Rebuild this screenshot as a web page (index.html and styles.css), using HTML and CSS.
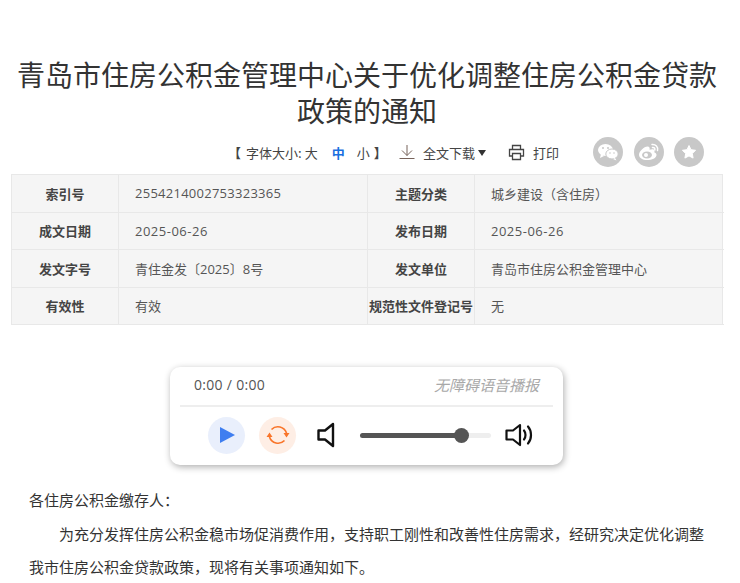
FILE: index.html
```html
<!DOCTYPE html>
<html lang="zh-CN">
<head>
<meta charset="utf-8">
<title>青岛市住房公积金管理中心关于优化调整住房公积金贷款政策的通知</title>
<link rel="stylesheet" href="styles.css">
</head>
<body>
<main class="page">
  <h1 class="title">青岛市住房公积金管理中心关于优化调整住房公积金贷款政策的通知</h1>
  <div class="tools">
    <div class="fontsize"><b class="br">【</b><span class="lbl">字体大小:</span><span class="sz">大</span><span class="sz on">中</span><span class="sz">小</span><b class="br">】</b></div>
    <div class="dl">
      <svg class="ico" width="16" height="16" viewBox="0 0 16 16"><path d="M8 1v10.500M3 6.500 8 11.500l5-5M.5 14.500h15" fill="none" stroke="#77635a" stroke-width="1"/></svg>
      <span>全文下载</span><i class="caret"></i>
    </div>
    <div class="print">
      <svg class="ico" width="17" height="17" viewBox="0 0 17 17"><path d="M4.500 5V1.500h8V5M4.500 12H1.500V5.500h14V12h-3M4.500 9.500h8v6h-8z" fill="none" stroke="#444" stroke-width="1.300"/></svg>
      <span>打印</span>
    </div>
    <div class="share">
      <span class="round"><svg width="22" height="20" viewBox="0 0 22 20"><ellipse cx="8.500" cy="8" rx="7.500" ry="6" fill="#fff"/><path d="M4 12l-1 4 4-2z" fill="#fff"/><ellipse cx="15" cy="12" rx="6.200" ry="5" fill="#fff" stroke="#c8c8c8"/><path d="M18 16l1.500 2.500-3.500-1.500z" fill="#fff"/><circle cx="6" cy="6" r="1" fill="#c8c8c8"/><circle cx="11" cy="6" r="1" fill="#c8c8c8"/><circle cx="13" cy="11" r=".8" fill="#c8c8c8"/><circle cx="17" cy="11" r=".8" fill="#c8c8c8"/></svg></span>
      <span class="round"><svg width="22" height="20" viewBox="0 0 22 20"><path d="M9 18c-4.500 0-8-2.200-8-5.300C1 9.500 6 4.500 9.500 4.500c2 0 2.500 1.500 2 3.300 2.500-1 5-1 5 1.200 0 .5 0 .9-.3 1.300 1.300.4 2.300 1.300 2.300 2.700 0 3-4.500 5-9.500 5z" fill="#fff"/><ellipse cx="9" cy="13" rx="5" ry="3.500" fill="#c8c8c8"/><circle cx="8" cy="13" r="2" fill="#fff"/><path d="M14 2.500c3.500-.5 6.500 2.500 5.500 6M14.500 5.500c1.800-.2 2.700 1 2.300 2.500" fill="none" stroke="#fff" stroke-width="1.500" stroke-linecap="round"/></svg></span>
      <span class="round"><svg width="18" height="18" viewBox="0 0 18 18"><path d="M9 2.500l2 4.200 4.600.6-3.300 3.200.8 4.600L9 12.900l-4.100 2.200.8-4.600L2.400 7.300 7 6.700z" fill="#fff" stroke="#fff" stroke-linejoin="round"/></svg></span>
    </div>
  </div>
  <div class="meta">
    <div class="k">索引号</div><div class="v num">2554214002753323365</div><div class="k">主题分类</div><div class="v">城乡建设（含住房）</div>
    <div class="k">成文日期</div><div class="v date">2025-06-26</div><div class="k">发布日期</div><div class="v date">2025-06-26</div>
    <div class="k">发文字号</div><div class="v">青住金发〔2025〕8号</div><div class="k">发文单位</div><div class="v">青岛市住房公积金管理中心</div>
    <div class="k">有效性</div><div class="v">有效</div><div class="k">规范性文件登记号</div><div class="v">无</div>
  </div>
  <section class="player">
    <div class="ptop"><span class="time">0:00 / 0:00</span><em class="brand">无障碍语音播报</em></div>
    <div class="pctl">
      <span class="btn play"><svg width="18" height="20" viewBox="0 0 18 20"><path d="M2 2l15 8-15 8z" fill="#3f7ef0"/></svg></span>
      <span class="btn loop"><svg width="26" height="26" viewBox="0 0 26 26"><path d="M6.500 7.500A9 9 0 0 1 21.500 11M19.500 18.500A9 9 0 0 1 4.500 15" fill="none" stroke="#f9752a" stroke-width="1.700"/><path d="M18.500 11h6l-3 4.500zM1.500 15h6l-3-4.500z" fill="#f9752a"/></svg></span>
      <svg class="vol" width="18" height="26" viewBox="0 0 18 26"><path d="M16 2 8 8.500H1.500v9H8l8 6.500z" fill="none" stroke="#111" stroke-width="2.400" stroke-linejoin="round"/></svg>
      <div class="track"><div class="fill"></div><div class="knob"></div></div>
      <svg class="vol2" width="29" height="26" viewBox="0 0 29 26"><path d="M15 3 8 8.500H1.500v9H8l7 5.500z" fill="none" stroke="#111" stroke-width="2.200" stroke-linejoin="round"/><path d="M19 8.500c2 2.500 2 6.500 0 9M23 4.500c4 4.500 4 12.500 0 17" fill="none" stroke="#111" stroke-width="2.200" stroke-linecap="round"/></svg>
    </div>
  </section>
  <article class="body">
    <p class="salute">各住房公积金缴存人：</p>
    <p class="para">为充分发挥住房公积金稳市场促消费作用，支持职工刚性和改善性住房需求，经研究决定优化调整我市住房公积金贷款政策，现将有关事项通知如下。</p>
  </article>
</main>
</body>
</html>
```

FILE: styles.css
```css
* { box-sizing: border-box; }
html, body { margin: 0; padding: 0; background: #fff; height: 583px; overflow: hidden; }
body { font-family: "Open Sans", "Noto Sans CJK SC", sans-serif; color: #333; }
.page { padding: 56px 17px 0 11px; }
.title { margin: 0; font-size: 28px; line-height: 36px; font-weight: 400; text-align: center; color: #333; font-family: "Noto Sans CJK SC", sans-serif; }
.tools { display: flex; align-items: center; height: 40px; margin-top: 4px; padding-left: 217px; font-size: 13px; color: #444; font-family: "Noto Sans CJK SC", sans-serif; }
.fontsize { display: flex; align-items: center; width: 171px; white-space: nowrap; }
.br { font-weight: 700; width: 13px; }
.lbl { margin: 0 3px 0 5px; }
.sz { margin-right: 14px; }
.sz.on { margin-right: 12px; }
.sz:nth-child(5) { margin-right: 4px; }
.sz.on { color: #1a6fe0; font-weight: 700; }
.dl { display: flex; align-items: center; margin-right: 22px; }
.dl .ico { margin-right: 8px; }
.caret { width: 0; height: 0; margin: 2px 0 0 3px; border: 4.500px solid transparent; border-top: 6px solid #333; border-bottom: 0; }
.print { display: flex; align-items: center; gap: 8px; width: 70px; }
.share { display: flex; gap: 10.500px; margin-left: 15px; }
.round { width: 30px; height: 30px; border-radius: 50%; background: #c8c8c8; display: flex; align-items: center; justify-content: center; }
.meta { display: grid; grid-template-columns: 107px 249px 107px 249px; grid-auto-rows: 37.500px; height: 151px; margin-top: 2px; width: 712px; border: 1px solid #e8e8e8; border-width: 1px 1px 0 1px; background: #f5f5f5; font-size: 13px; color: #555; font-family: "Open Sans", "Noto Sans CJK SC", sans-serif; }
.meta > div { display: flex; align-items: center; border-bottom: 1px solid #e8e8e8; white-space: nowrap; }
.k { justify-content: center; font-weight: 700; color: #444; border-right: 1px solid #e8e8e8; }
.v { padding-left: 16px; border-right: 1px solid #e8e8e8; }
.v:nth-child(4n) { border-right: 0; }
.num { letter-spacing: .26px; }
.date { letter-spacing: .5px; }
.player { width: 393px; height: 98px; margin: 42px 0 0 159px; border-radius: 10px; background: #fff; box-shadow: 1px 2px 7px rgba(0,0,0,.32); padding: 0 10px; }
.ptop { display: flex; justify-content: space-between; align-items: center; height: 40px; padding: 0 14px 3px; border-bottom: 2px solid #eee; }
.time { font-size: 14px; letter-spacing: .3px; color: #555; font-family: "Open Sans", "Noto Sans CJK SC", sans-serif; }
.brand { font-size: 15px; color: #a8a8a8; font-style: italic; font-family: "Noto Sans CJK SC", sans-serif; }
.pctl { display: flex; align-items: center; height: 56px; padding: 0 0 0 28px; }
.btn { width: 37px; height: 37px; border-radius: 50%; display: flex; align-items: center; justify-content: center; }
.play { background: #e9effc; }
.loop { background: #feeee5; margin-left: 14px; }
.vol { margin-left: 21px; }
.track { position: relative; width: 131px; height: 5px; margin-left: 25px; background: #eee; border-radius: 3px; }
.fill { width: 101px; height: 5px; background: #555; border-radius: 3px; }
.knob { position: absolute; left: 94px; top: -5px; width: 15px; height: 15px; border-radius: 50%; background: #555; }
.vol2 { margin-left: 14px; }
.body { padding: 0 8px 0 18px; margin-top: 18px; font-size: 15px; line-height: 33.500px; color: #333; font-family: "Noto Sans CJK SC", sans-serif; }
.body p { margin: 0; }
.para { text-indent: 30px; }
```
